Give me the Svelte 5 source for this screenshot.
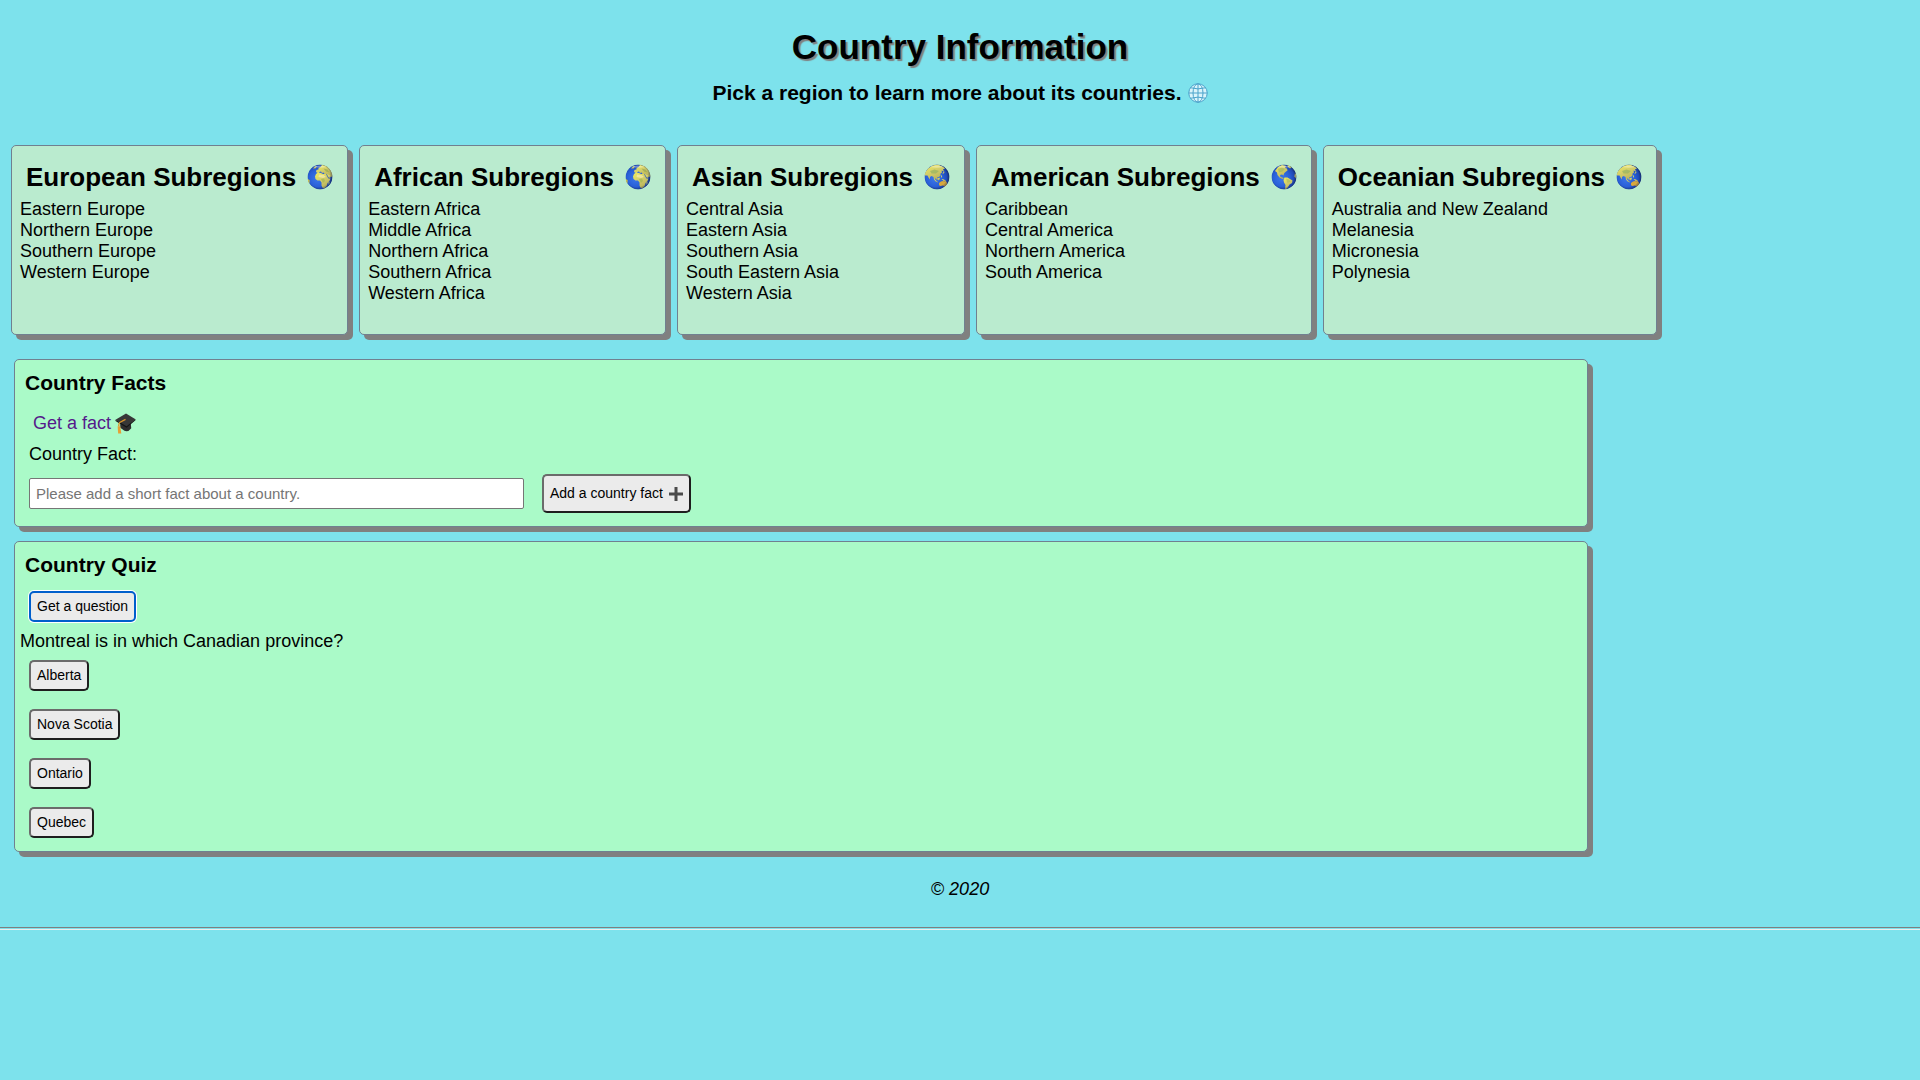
<script>
  const regions = [
    {
      name: 'European',
      globe: 'africa',
      items: ['Eastern Europe', 'Northern Europe', 'Southern Europe', 'Western Europe'],
    },
    {
      name: 'African',
      globe: 'africa',
      items: ['Eastern Africa', 'Middle Africa', 'Northern Africa', 'Southern Africa', 'Western Africa'],
    },
    {
      name: 'Asian',
      globe: 'asia',
      items: ['Central Asia', 'Eastern Asia', 'Southern Asia', 'South Eastern Asia', 'Western Asia'],
    },
    {
      name: 'American',
      globe: 'america',
      items: ['Caribbean', 'Central America', 'Northern America', 'South America'],
    },
    {
      name: 'Oceanian',
      globe: 'asia',
      items: ['Australia and New Zealand', 'Melanesia', 'Micronesia', 'Polynesia'],
    },
  ];
  const answers = ['Alberta', 'Nova Scotia', 'Ontario', 'Quebec'];
  let fact = $state('');
</script>

{#snippet globe(kind, id)}
  <svg class="globe" viewBox="0 0 52 52" aria-hidden="true">
    <defs>
      <radialGradient id="sea-{id}" cx="0.4" cy="0.55" r="0.6">
        <stop offset="0" stop-color="#3c78ea" />
        <stop offset="0.55" stop-color="#2a60d8" />
        <stop offset="0.85" stop-color="#1f48b4" />
        <stop offset="1" stop-color="#173480" />
      </radialGradient>
      <linearGradient id="land-{id}" x1="0" y1="0" x2="0.6" y2="1">
        <stop offset="0" stop-color="#f4ee5a" />
        <stop offset="0.5" stop-color="#d3cf6a" />
        <stop offset="1" stop-color="#b9b25a" />
      </linearGradient>
      <radialGradient id="rim-{id}" cx="0.46" cy="0.46" r="0.56">
        <stop offset="0.78" stop-color="#14285c" stop-opacity="0" />
        <stop offset="1" stop-color="#14285c" stop-opacity="0.55" />
      </radialGradient>
      <clipPath id="disc-{id}"><circle cx="26" cy="26" r="25" /></clipPath>
    </defs>
    <g clip-path="url(#disc-{id})">
      <circle cx="26" cy="26" r="25" fill="url(#sea-{id})" />
      {#if kind === 'africa'}
        <g fill="url(#land-{id})">
          <path d="M18 16l1-4 4-1 0-3 4-2 3-4 8 1 8 6 5 9 0 8-4-1-3-4-3 1-3-2-3 0-2-3-3 1-2-3-3 1-2 3z" />
          <path d="M18 20l4-3 6 1 4 2 6 0 3 6 2 3 4 0-2 5-4 4-1 5-4 5-4 1-3-6 0-6-3-4-5 0-4-3-1-5z" />
          <path d="M41 20l5 2 2 4-4 2-3-4z" />
          <path d="M43 37l2-2 0 4-2 3z" />
          <path d="M1 30l4 2 0 5-3 3z" fill="#e8d23a" />
          <path d="M12 9l4-4 4-1-3 5z" />
        </g>
        <path d="M24 21l9 1 5 4-6 2-9-2z" fill="#f6ecb0" opacity="0.7" />
        <path d="M28 30l6-1 2 5-4 4z" fill="#8fae4c" opacity="0.5" />
        <path d="M33 9l8 2 4 6-7-2z" fill="#7f9a4a" opacity="0.5" />
      {:else if kind === 'asia'}
        <g fill="url(#land-{id})">
          <path d="M2 17l6-8 9-6 11-2 11 5 3 4-4 0 2 5-5-2 1 4-3 2 0 4-3 3-4 1 2 4-2 1-3-4-1 4-2-1-1-5-4-2-3 2 0 5-3-4-2-4-5 0z" />
          <path d="M20 29l4 4 4 3-1 1-5-3z" />
          <path d="M27 29l4-2 1 3-3 3z" />
          <path d="M35 30l5 1 4 3-5 0z" />
          <path d="M34 22l2 2 0 4-2-2z" />
          <path d="M40 14l1 3-3 3-1-1z" />
        </g>
        <path d="M30 38l4-3 4-1 3 1 1-2 4 4 0 5-4 4-4-3-6 1-2-2z" fill="#d8a83c" />
        <path d="M12 14l9-3 9 3-6 5-9 0z" fill="#8caf60" opacity="0.6" />
      {:else}
        <g fill="url(#land-{id})">
          <path d="M8 14l6-8 8-4 8 2-2 4 4 1 1 4-4 3-3 3-1 4-3-2-4 1 1 4 4 1 3 3-3 0-6-3-4-5-1-5z" />
          <path d="M27 27l6 0 5 3 5 3-1 5-5 3-3 5-4 5-2-1 1-8-3-5-1-5z" />
          <path d="M33 2l5 1 3 4-3 2-4-3z" />
          <path d="M48 18l3 5-1 6-3-4z" />
        </g>
        <path d="M14 10l8-3 6 3-5 5-7 2z" fill="#8caf60" opacity="0.5" />
        <path d="M30 29l6 2 3 4-6 3z" fill="#8caf60" opacity="0.4" />
      {/if}
      <path d="M12 6Q26 0 40 6Q26 9 12 6z" fill="#fff" opacity="0.35" />
      <circle cx="26" cy="26" r="25" fill="url(#rim-{id})" />
    </g>
  </svg>
{/snippet}

<div class="page">
  <header>
    <h1>Country Information</h1>
    <h3 class="tagline">
      Pick a region to learn more about its countries.
      <svg class="meridians" viewBox="0 0 40 40" aria-hidden="true">
        <circle cx="20" cy="20" r="18.5" fill="#d9f4fb" stroke="#4ba3cb" stroke-width="2" />
        <g fill="none" stroke="#4ba3cb" stroke-width="2">
          <path d="M20 1.500V38.500M1.500 20H38.500M5 9.500Q20 14 35 9.500M5 30.500Q20 26 35 30.500" />
          <ellipse cx="20" cy="20" rx="10" ry="18.500" />
        </g>
      </svg>
    </h3>
  </header>

  <main>
    <section class="regions" aria-label="Regions">
      {#each regions as region, i}
        <article class="card">
          <h2>{region.name} Subregions {@render globe(region.globe, i)}</h2>
          <ul>
            {#each region.items as item}
              <li>{item}</li>
            {/each}
          </ul>
        </article>
      {/each}
    </section>

    <section class="panel">
      <h3>Country Facts</h3>
      <a class="fact-link" href="#fact">
        Get a fact
        <svg class="cap" viewBox="0 0 40 40" aria-hidden="true">
          <path d="M10 17L30 20L31 29Q25 37 18 34L10 28z" fill="#2d2d2d" />
          <path d="M1 13L21 1L39 12L22 27z" fill="#373737" />
          <path d="M1 13L22 25L39 12V14L22 28L1 15z" fill="#141414" />
          <path d="M20 12L9 18Q7 20 7 25" fill="none" stroke="#d8952c" stroke-width="2.500" />
          <path d="M5 25H10L12 39H6z" fill="#e6a035" />
        </svg>
      </a>
      <form onsubmit={(e) => e.preventDefault()}>
        <label for="fact-text">Country Fact:</label>
        <div class="entry">
          <input
            id="fact-text"
            type="text"
            placeholder="Please add a short fact about a country."
            bind:value={fact}
          />
          <button class="add" type="submit">
            Add a country fact
            <svg class="plus" viewBox="0 0 14 14" aria-hidden="true">
              <path d="M5.500 0H8.500V5.500H14V8.500H8.500V14H5.500V8.500H0V5.500H5.500z" fill="#4a4a4a" />
            </svg>
          </button>
        </div>
      </form>
    </section>

    <section class="panel">
      <h3>Country Quiz</h3>
      <button class="ask" type="button">Get a question</button>
      <p>Montreal is in which Canadian province?</p>
      <div class="answers">
        {#each answers as answer}
          <button type="button">{answer}</button>
        {/each}
      </div>
    </section>
  </main>

  <footer>© 2020</footer>
  <hr />
</div>

<style>
  :global(body) {
    background: #7de2ec;
  }

  .page {
    padding-top: 27px;
    color: #000;
    font-family: 'Liberation Sans', Arial, Helvetica, sans-serif;
    font-size: 18px;
    line-height: 21px;
  }

  h1,
  h2,
  h3,
  p,
  ul {
    margin: 0;
    padding: 0;
  }

  header {
    margin-bottom: 40px;
  }

  h1 {
    font-size: 35px;
    line-height: 40px;
    text-align: center;
    text-shadow: 2px 2px 1px #808080;
  }

  h3 {
    font-size: 21px;
    line-height: 24px;
  }

  .tagline {
    display: flex;
    justify-content: center;
    align-items: center;
    gap: 6px;
    margin-top: 14px;
  }

  .meridians {
    width: 20px;
    height: 20px;
  }

  .regions {
    display: flex;
    flex-wrap: wrap;
    gap: 11px;
    margin: 0 11px 24px;
  }

  .card,
  .panel {
    box-sizing: border-box;
    border: 1px solid #708090;
    border-radius: 5px;
    box-shadow: 5px 5px #808080;
  }

  .card {
    padding: 16px 8px 30px;
    background: #baebcf;
  }

  h2 {
    display: flex;
    align-items: center;
    gap: 11px;
    margin-bottom: 7px;
    padding: 0 6px;
    font-size: 26px;
    line-height: 30px;
  }

  .globe {
    width: 26px;
    height: 26px;
  }

  ul {
    list-style: none;
  }

  .panel {
    width: 82%;
    margin: 0 14px 14px;
    padding: 11px 5px 13px;
    background: #aafac8;
  }

  .panel h3 {
    margin: 0 5px;
  }

  .fact-link {
    display: flex;
    align-items: center;
    gap: 4px;
    width: fit-content;
    margin: 18px 13px 10px;
    color: #551a8b;
    text-decoration: none;
  }

  .cap {
    width: 21px;
    height: 21px;
  }

  form {
    margin: 0 9px;
  }

  label {
    display: block;
    margin-bottom: 9px;
  }

  .entry {
    display: flex;
    align-items: center;
    gap: 18px;
  }

  input {
    box-sizing: border-box;
    width: 495px;
    height: 31px;
    padding: 5px 6px;
    border: 1px solid #767676;
    border-radius: 2px;
    background: #fff;
    font-family: inherit;
    font-size: 15px;
  }

  input::placeholder {
    color: #757575;
  }

  button {
    padding: 5px 6px;
    border: 2px solid;
    border-color: #6b6b6b #1e1e1e #1e1e1e #6b6b6b;
    border-radius: 5px;
    background: #ebebeb;
    color: #000;
    font-family: inherit;
    font-size: 14px;
    line-height: 17px;
  }

  .add {
    display: flex;
    align-items: center;
    gap: 6px;
    padding: 9px 6px;
  }

  .plus {
    width: 14px;
    height: 14px;
  }

  .ask {
    display: block;
    margin: 14px 9px 9px;
    border-color: #005fcc;
    box-shadow: 0 0 0 1px #fff;
  }

  .answers {
    display: flex;
    flex-direction: column;
    align-items: flex-start;
    gap: 18px;
    margin: 8px 9px 0;
  }

  footer {
    margin: 27px 0;
    font-style: italic;
    text-align: center;
  }

  hr {
    height: 1px;
    margin: 0;
    border: solid;
    border-width: 1px 0;
    border-color: #808080 #eeeeee #eeeeee #808080;
  }
</style>
